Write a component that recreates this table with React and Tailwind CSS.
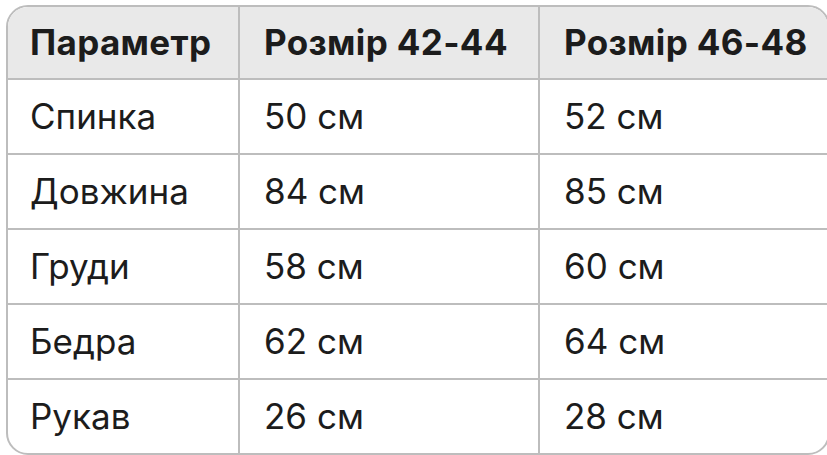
const headers = ["Параметр", "Розмір 42-44", "Розмір 46-48"];

const rows = [
  ["Спинка", "50 см", "52 см"],
  ["Довжина", "84 см", "85 см"],
  ["Груди", "58 см", "60 см"],
  ["Бедра", "62 см", "64 см"],
  ["Рукав", "26 см", "28 см"],
];

const cols = ["w-[232px] border-r-2", "w-[300px] border-r-2", "w-[288px]"];

export default function App() {
  return (
    <div
      className="w-[827px] h-[455px] overflow-hidden bg-white pt-[5px] pl-[6px]"
      style={{ fontFamily: "Inter, 'Noto Sans', sans-serif" }}
    >
      <div className="w-[824px] border-2 border-[#bdbdbd] rounded-[22px] overflow-hidden text-[35px] text-[#1c1c1c]">
        <div className="flex h-[73px] bg-[#e9e9e9] border-b-2 border-[#bdbdbd] font-bold tracking-[0.01em]">
          {headers.map((h, i) => (
            <div key={h} className={`${cols[i]} border-[#bdbdbd] flex items-center pl-[22px] ${i > 0 ? "pl-[24px]" : ""}`}>
              {h}
            </div>
          ))}
        </div>
        {rows.map((r, ri) => (
          <div
            key={r[0]}
            className={`flex ${ri < rows.length - 1 ? "h-[75px] border-b-2" : "h-[73px]"} border-[#bdbdbd]`}
          >
            {r.map((c, i) => (
              <div key={i} className={`${cols[i]} border-[#bdbdbd] flex items-center ${i > 0 ? "pl-[24px]" : "pl-[22px]"}`}>
                {c}
              </div>
            ))}
          </div>
        ))}
      </div>
    </div>
  );
}
